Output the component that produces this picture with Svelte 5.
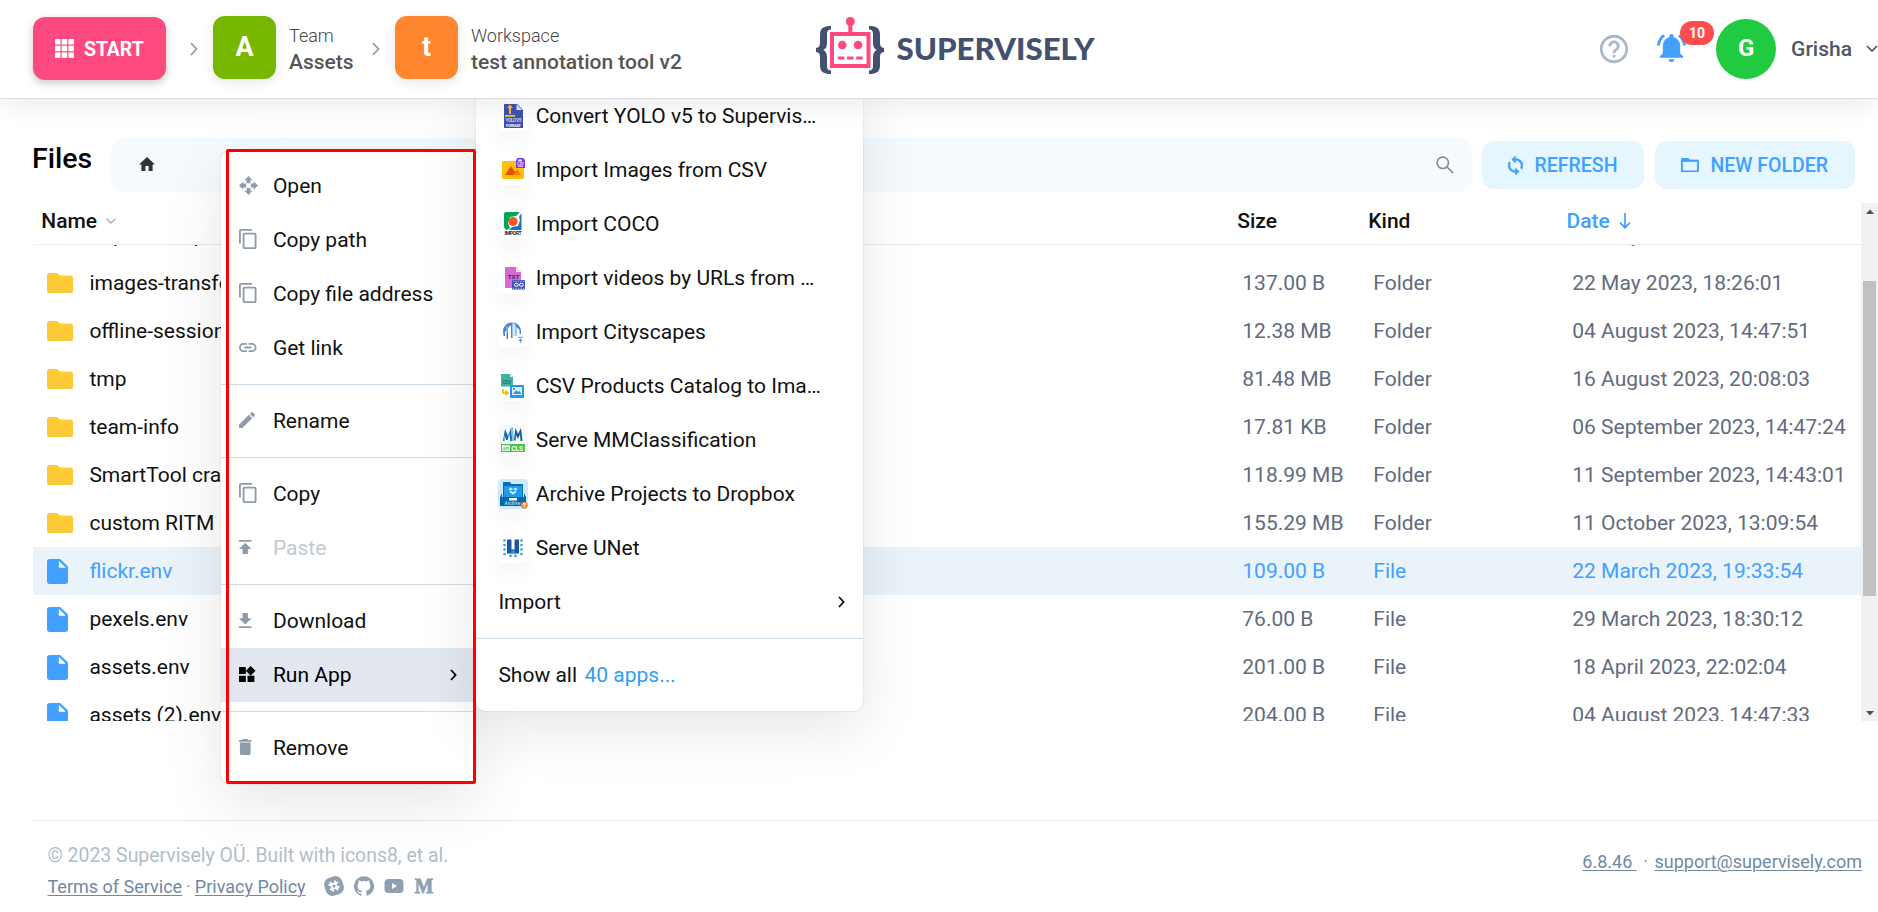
<script>
  const files = [
    { name: 'import-temp', size: '', kind: '', date: '22 May 2023, 18:20:01', type: 'folder' },
    { name: 'images-transforms', size: '137.00 B', kind: 'Folder', date: '22 May 2023, 18:26:01', type: 'folder' },
    { name: 'offline-sessions', size: '12.38 MB', kind: 'Folder', date: '04 August 2023, 14:47:51', type: 'folder' },
    { name: 'tmp', size: '81.48 MB', kind: 'Folder', date: '16 August 2023, 20:08:03', type: 'folder' },
    { name: 'team-info', size: '17.81 KB', kind: 'Folder', date: '06 September 2023, 14:47:24', type: 'folder' },
    { name: 'SmartTool cra', size: '118.99 MB', kind: 'Folder', date: '11 September 2023, 14:43:01', type: 'folder' },
    { name: 'custom RITM', size: '155.29 MB', kind: 'Folder', date: '11 October 2023, 13:09:54', type: 'folder' },
    { name: 'flickr.env', size: '109.00 B', kind: 'File', date: '22 March 2023, 19:33:54', type: 'file', selected: true },
    { name: 'pexels.env', size: '76.00 B', kind: 'File', date: '29 March 2023, 18:30:12', type: 'file' },
    { name: 'assets.env', size: '201.00 B', kind: 'File', date: '18 April 2023, 22:02:04', type: 'file' },
    { name: 'assets (2).env', size: '204.00 B', kind: 'File', date: '04 August 2023, 14:47:33', type: 'file' }
  ];

  const copyPath = 'M16 1H4c-1.1 0-2 .9-2 2v14h2V3h12V1zm3 4H8c-1.1 0-2 .9-2 2v14c0 1.1.9 2 2 2h11c1.1 0 2-.9 2-2V7c0-1.1-.9-2-2-2zm0 16H8V7h11v14z';
  const copy = { box: '2 1 19 22', w: 17.5, h: 20, d: copyPath };
  const groups = [
    [
      { label: 'Open', icon: { box: '0 0 20 20', w: 19, h: 19, d: 'M10 0l4.200 4.500h-2.200v3h-4v-3H5.800zM10 20l-4.200-4.500h2.200v-3h4v3h2.200zM0 10l4.500-4.200v2.200h3v4h-3v2.200zM20 10l-4.500 4.200v-2.200h-3v-4h3v-2.200z' } },
      { label: 'Copy path', icon: copy },
      { label: 'Copy file address', icon: copy },
      { label: 'Get link', icon: { box: '2 7 20 10', w: 17.5, h: 9, d: 'M3.900 12c0-1.710 1.390-3.100 3.100-3.100h4V7H7c-2.760 0-5 2.240-5 5s2.240 5 5 5h4v-1.900H7c-1.710 0-3.100-1.390-3.100-3.100zM8 13h8v-2H8v2zm9-6h-4v1.900h4c1.710 0 3.100 1.390 3.100 3.100s-1.390 3.100-3.100 3.100h-4V17h4c2.760 0 5-2.240 5-5s-2.240-5-5-5z' } }
    ],
    [{ label: 'Rename', icon: { box: '3 3 18 18', w: 16, h: 16, d: 'M3 17.250V21h3.750L17.810 9.940l-3.750-3.750L3 17.250zM20.710 7.040c.39-.39.39-1.020 0-1.410l-2.340-2.340c-.39-.39-1.020-.39-1.410 0l-1.830 1.830 3.750 3.750 1.830-1.830z' } }],
    [
      { label: 'Copy', icon: copy },
      { label: 'Paste', disabled: true, icon: { box: '5 4 14 16', w: 12.500, h: 14.500, d: 'M5 4v2h14V4H5zm0 10h4v6h6v-6h4l-7-7-7 7z' } }
    ],
    [
      { label: 'Download', icon: { box: '5 3 14 17', w: 12.500, h: 15, d: 'M19 9h-4V3H9v6H5l7 7 7-7zM5 18v2h14v-2H5z' } },
      { label: 'Run App', active: true, icon: { box: '3 1.700 19.300 19.300', w: 16.500, h: 16.500, d: 'M13 13v8h8v-8h-8zM3 21h8v-8H3v8zM3 3v8h8V3H3zm13.660-1.310L11 7.340 16.660 13l5.660-5.660-5.660-5.650z' } }
    ],
    [{ label: 'Remove', icon: { box: '5 3 14 18', w: 12.500, h: 16, d: 'M6 19c0 1.100.9 2 2 2h8c1.100 0 2-.9 2-2V7H6v12zM19 4h-3.500l-1-1h-5l-1 1H5v2h14V4z' } }]
  ];

  const apps = [
    { id: 'yolo', label: 'Convert YOLO v5 to Supervis…' },
    { id: 'csv', label: 'Import Images from CSV' },
    { id: 'coco', label: 'Import COCO' },
    { id: 'url', label: 'Import videos by URLs from …' },
    { id: 'city', label: 'Import Cityscapes' },
    { id: 'catalog', label: 'CSV Products Catalog to Ima…' },
    { id: 'mm', label: 'Serve MMClassification' },
    { id: 'dropbox', label: 'Archive Projects to Dropbox' },
    { id: 'unet', label: 'Serve UNet' }
  ];
</script>

{#snippet chevron(cls)}
  <svg class={cls} width="8" height="14" viewBox="0 0 8 14" fill="none" stroke="currentColor" stroke-width="1.8"><path d="M1 1l5.500 6L1 13" /></svg>
{/snippet}

{#snippet menuArrow()}
  <svg class="arrow" width="7" height="12" viewBox="0 0 7 12" fill="none" stroke="currentColor" stroke-width="1.800"><path d="M1 1l4.600 5L1 11" /></svg>
{/snippet}

{#snippet appIcon(id)}
  <svg width="30" height="30" viewBox="0 0 30 30">
    {#if id === 'yolo'}
      <path d="M6 3h13l6 6v18H6z" fill="#3f51b5" />
      <path d="M18.500 3.500V9H24z" fill="#e8eaf6" />
      <path d="M12 3.500l3 3.500h-2v6h-2V7H9zM7 14h10v1.700H7z" fill="#ffc107" />
      <text x="15.500" y="21.300" font-size="4.800" font-weight="700" text-anchor="middle" fill="#c5cae9" textLength="16">YOLO V5</text>
      <text x="15.500" y="26.200" font-size="4.300" font-weight="700" text-anchor="middle" fill="#e8eaf6" textLength="15">FORMAT</text>
    {:else if id === 'csv'}
      <rect x="4" y="6" width="22" height="18" rx="1.500" fill="#ffc107" />
      <path d="M7 20l6-9 6 9z" fill="#e65100" />
      <path d="M15 20l4-6 4 6z" fill="#f57c00" />
      <path d="M19 3h6l2 2v8h-9V6z" fill="#7c3aed" />
      <path d="M20 4.500h4v2h-4zM20 10.500h5v1.300h-5z" fill="#e4d4ff" />
      <text x="22.500" y="10" font-size="3.600" font-weight="700" text-anchor="middle" fill="#e4d4ff">CSV</text>
    {:else if id === 'coco'}
      <path d="M6 5q0-2 2-2h14l-4 4-6 1-2 6 2 5-3 2q-3-1-3-4z" fill="#00a651" />
      <path d="M23.500 4v17H11l3-3 6-1 2-6-1-3z" fill="#1c75bc" />
      <circle cx="15" cy="12.500" r="4.600" fill="#ff5722" />
      <text x="15" y="26.300" font-size="5" font-weight="700" text-anchor="middle" fill="#222" textLength="17">IMPORT</text>
    {:else if id === 'url'}
      <path d="M7 4h11l5 5v16H7z" fill="#d56ad0" />
      <path d="M18 4v5h5z" fill="#f8dcf6" />
      <text x="15.500" y="16" font-size="6.200" font-weight="700" text-anchor="middle" fill="#5a1a80">TXT</text>
      <rect x="14" y="17" width="13" height="9.500" fill="#3f51b5" />
      <path d="M15 18.200h11.500M15 25.300h11.500" stroke="#c5cae9" stroke-width="1" stroke-dasharray="1.200 1.300" />
      <rect x="16.500" y="20.300" width="3.800" height="3" rx="1.500" fill="none" stroke="#fff" />
      <rect x="21.500" y="20.300" width="3.800" height="3" rx="1.500" fill="none" stroke="#fff" />
    {:else if id === 'city'}
      <path d="M5 14a9 8.500 0 0 1 18 0v3h-1.500v-4l-3-3v9h-1V8l-3-2v15h-1.500V8l-3 3v11H8.500v-9L7 15v4H5.500z" fill="#3f8ad0" />
      <path d="M9 9v6M16 6v13" stroke="#a9cdf0" />
      <path d="M20 20.200h5M22.500 26v-4M20.900 23.600l1.600-1.600 1.600 1.600" stroke="#5a9bdc" fill="none" stroke-width="1.100" />
    {:else if id === 'catalog'}
      <path d="M3 3h9l3 3v9.500H3z" fill="#3eb5a4" />
      <path d="M12 3v3h3z" fill="#c9eee8" />
      <text x="8.500" y="12.500" font-size="4.500" font-weight="700" text-anchor="middle" fill="#16796c">CSV</text>
      <path d="M5 18v4h4M7.500 19.800L10 22l-2.500 2.200" stroke="#ffb300" stroke-width="1.700" fill="none" />
      <rect x="12" y="14" width="14" height="13" fill="#2196f3" />
      <rect x="14" y="16" width="10" height="8" fill="#e3f2fd" />
      <path d="M15 23l3-4 2 2 1.500-1 2 3z" fill="#2196f3" />
      <circle cx="16" cy="18" r="1" fill="#1976d2" />
    {:else if id === 'mm'}
      <rect width="30" height="30" rx="4" fill="#f6f8fa" />
      <path d="M5 16L7 4l3 7 3-8 1.500 13h-2.200l-.8-7-2 6h-1.500l-1.500-5L6.500 16z" fill="#0d6cb5" />
      <path d="M13 3l2-1 1 14h-2z" fill="#7cc3ea" />
      <path d="M16 15l1.500-12L20 9l3-6 1.500 13h-2l-.5-7-2 5-2-4-.5 6z" fill="#175a92" />
      <rect x="3" y="19" width="24" height="8" fill="#44c544" />
      <rect x="4" y="20.300" width="8" height="5.500" fill="#fff" />
      <text x="8" y="25" font-size="4" font-weight="700" text-anchor="middle" fill="#44c544">API</text>
      <text x="19.200" y="25.600" font-size="6.500" font-weight="700" text-anchor="middle" fill="#fff">CLS</text>
    {:else if id === 'dropbox'}
      <rect width="30" height="30" rx="4" fill="#cdeaff" />
      <path d="M5 3h7l1.500 2H25v14H5z" fill="#0870b0" />
      <path d="M6 7h18v13H6z" fill="#1c9cf0" />
      <path d="M2 18l2-4v4h22v-4l2 4v9H2z" fill="#0c65a6" />
      <path d="M12.200 8.500l2.800 1.600-2.800 1.600-1.600-1.600zM17.800 8.500L15 10.100l2.800 1.600 1.600-1.600zM15 13l2.500-1.200 1 1.200-3.500 2.700L11.500 13l1-1.200z" fill="#d3edff" />
      <rect x="11" y="19" width="8" height="2.500" fill="#fff" />
      <text x="14.500" y="26" font-size="4.800" font-style="italic" font-weight="700" text-anchor="middle" fill="#9fd0f3">Archive</text>
      <circle cx="26.300" cy="26.300" r="3.400" fill="#f58220" />
      <path d="M26.300 28.300v-4M24.700 25.600l1.600-1.700 1.600 1.700" stroke="#fff" fill="none" />
    {:else}
      <path d="M9 6.500h4.500v10h3v-10H21v14H9z" fill="#1c5aa0" />
      <path d="M13.500 16.500h3v4h-3z" fill="#2f8fd8" />
      <g fill="#29a3e0">
        {#each [7.500, 12, 16.500, 21] as y}
          <circle cx="6.500" cy={y} r="1.300" /><circle cx="23.500" cy={y} r="1.300" />
        {/each}
        <circle cx="12.500" cy="22.800" r="1.400" /><circle cx="17.500" cy="22.800" r="1.400" />
      </g>
    {/if}
  </svg>
{/snippet}

<div class="page">
  <header>
    <button class="start">
      <svg width="19" height="19" viewBox="0 0 19 19" fill="#fff">
        {#each [0, 6.700, 13.400] as y}{#each [0, 6.700, 13.400] as x}<rect {x} {y} width="5.500" height="5.500" />{/each}{/each}
      </svg>
      <span>START</span>
    </button>
    {@render chevron('crumb c1')}
    <div class="tile green">A</div>
    <div class="crumb-text team"><span>Team</span><b>Assets</b></div>
    {@render chevron('crumb c2')}
    <div class="tile orange">t</div>
    <div class="crumb-text"><span>Workspace</span><b>test annotation tool v2</b></div>

    <svg class="logo" width="280" height="60" viewBox="0 0 280 60">
      <g fill="#435070">
        <path d="M16 12v3.500c-3 .2-4 1.500-4 5v8c0 4-1.200 6.500-3.800 7.500 2.600 1 3.800 3.500 3.800 7.500v8c0 3.500 1 4.800 4 5V60c-8 0-11-2.500-11-9v-8c0-3-1-4.500-4-5v-4c3-.5 4-2 4-5v-8c0-6.500 3-9 11-9z" />
        <path d="M54 12v3.500c3 .2 4 1.500 4 5v8c0 4 1.200 6.500 3.800 7.500-2.600 1-3.800 3.500-3.800 7.500v8c0 3.500-1 4.800-4 5V60c8 0 11-2.500 11-9v-8c0-3 1-4.500 4-5v-4c-3-.5-4-2-4-5v-8c0-6.500-3-9-11-9z" />
      </g>
      <rect x="17" y="20" width="36.500" height="32" fill="#fff" stroke="#ff4a7f" stroke-width="4" />
      <path d="M35.300 8v12" stroke="#ff4a7f" stroke-width="4" />
      <g fill="#ff4a7f">
        <circle cx="35.300" cy="7.500" r="4.500" />
        <circle cx="27.300" cy="31" r="4.300" /><circle cx="43" cy="31" r="4.300" />
        <path d="M22.800 42.500h6.500v3h-6.500zM32 42.500h6.500v3H32zM41.200 42.500h6.500v3h-6.500z" />
      </g>
      <text x="81.500" y="45.800" textLength="198" lengthAdjust="spacingAndGlyphs" class="wordmark">SUPERVISELY</text>
    </svg>

    <div class="account">
      <svg class="help" width="34" height="34" viewBox="0 0 24 24" fill="#a9b9c9"><path d="M11 18h2v-2h-2v2zm1-16C6.480 2 2 6.480 2 12s4.480 10 10 10 10-4.480 10-10S17.520 2 12 2zm0 18c-4.410 0-8-3.590-8-8s3.590-8 8-8 8 3.590 8 8-3.590 8-8 8zm0-14c-2.210 0-4 1.790-4 4h2c0-1.100.9-2 2-2s2 .9 2 2c0 2-3 1.750-3 5h2c0-2.250 3-2.500 3-5 0-2.210-1.790-4-4-4z" /></svg>
      <div class="bell">
        <svg width="29" height="28" viewBox="2 2.500 20 19.500" preserveAspectRatio="none" fill="#42a0ff"><path d="M7.580 4.080L6.150 2.650C3.750 4.480 2.170 7.300 2.030 10.500h2c.15-2.650 1.510-4.970 3.550-6.420zm12.390 6.420h2c-.15-3.200-1.730-6.020-4.120-7.850l-1.420 1.430c2.020 1.450 3.390 3.770 3.540 6.420zM18 11c0-3.070-1.640-5.640-4.500-6.320V4c0-.83-.67-1.500-1.500-1.500s-1.500.67-1.500 1.500v.68C7.630 5.360 6 7.920 6 11v5l-2 2v1h16v-1l-2-2v-5zm-6 11c.14 0 .27-.01.4-.04.65-.14 1.180-.58 1.440-1.180.1-.24.15-.5.15-.78h-4c.01 1.100.9 2 2.010 2z" /></svg>
        <span class="badge">10</span>
      </div>
      <div class="avatar">G</div>
      <span class="user">Grisha</span>
      <svg width="12" height="7" viewBox="0 0 12 7" fill="none" stroke="#435070" stroke-width="1.600"><path d="M1 1l5 5 5-5" /></svg>
    </div>
  </header>

  <main>
    <div class="toolbar">
      <h1>Files</h1>
      <div class="path">
        <svg class="home" width="16" height="14" viewBox="2 3 20 17" preserveAspectRatio="none" fill="#333"><path d="M10 20v-6h4v6h5v-8h3L12 3 2 12h3v8z" /></svg>
        <svg width="18" height="18" viewBox="0 0 18 18" fill="none" stroke="#8c8c8c" stroke-width="1.700"><circle cx="6.800" cy="6.800" r="5.700" /><path d="M11 11l6 6" /></svg>
      </div>
      <button class="action refresh">
        <svg width="15" height="19" viewBox="4 1 16 22" preserveAspectRatio="none" fill="currentColor" stroke="currentColor" stroke-width=".7"><path d="M12 4V1L8 5l4 4V6c3.310 0 6 2.690 6 6 0 1.010-.25 1.970-.7 2.800l1.460 1.460C19.540 15.030 20 13.570 20 12c0-4.420-3.580-8-8-8zm0 14c-3.310 0-6-2.690-6-6 0-1.010.25-1.970.7-2.800L5.240 7.740C4.460 8.970 4 10.430 4 12c0 4.420 3.580 8 8 8v3l4-4-4-4v3z" /></svg>
        <span>REFRESH</span>
      </button>
      <button class="action newf">
        <svg width="18" height="14.500" viewBox="2 4 20 16" fill="currentColor" stroke="currentColor" stroke-width=".4"><path d="M20 6h-8l-2-2H4c-1.100 0-1.990.9-1.990 2L2 18c0 1.100.9 2 2 2h16c1.100 0 2-.9 2-2V8c0-1.100-.9-2-2-2zm0 12H4V8h16v10z" /></svg>
        <span>NEW FOLDER</span>
      </button>
    </div>

    <div class="table">
      <div class="grid">
        <div class="row head">
          <div>Name <svg width="10" height="6" viewBox="0 0 10 6" fill="none" stroke="#aaa" stroke-width="1.400"><path d="M.5.500l4.500 4.500L9.500.500" /></svg></div>
          <div>Size</div>
          <div>Kind</div>
          <div class="sorted">Date <svg width="12" height="16" viewBox="0 0 12 16" fill="none" stroke="currentColor" stroke-width="1.700"><path d="M6 0v14.500M1 9.700l5 5 5-5" /></svg></div>
        </div>
        <div class="rows">
          {#each files as f}
            <div class="row item" class:selected={f.selected}>
              <div class="name">
                <span class="ficon">
                  {#if f.type === 'folder'}
                    <svg width="26" height="20.500" viewBox="2 4 20 16" preserveAspectRatio="none" fill="#ffca38"><path d="M10 4H4c-1.100 0-1.990.9-1.990 2L2 18c0 1.100.9 2 2 2h16c1.100 0 2-.9 2-2V8c0-1.100-.9-2-2-2h-8l-2-2z" /></svg>
                  {:else}
                    <svg width="21" height="25" viewBox="4 2 16 20" preserveAspectRatio="none" fill="#42a0ff"><path d="M6 2c-1.100 0-1.990.9-1.990 2L4 20c0 1.100.89 2 1.990 2H18c1.100 0 2-.9 2-2V8l-6-6H6zm7 7V3.500L18.500 9H13z" /></svg>
                  {/if}
                </span>
                {f.name}
              </div>
              <div>{f.size}</div>
              <div>{f.kind}</div>
              <div>{f.date}</div>
            </div>
          {/each}
        </div>
      </div>
      <div class="scroll">
        <svg width="8" height="5" viewBox="0 0 8 5" fill="#505050"><path d="M0 5l4-4.500L8 5z" /></svg>
        <i></i>
        <svg width="8" height="5" viewBox="0 0 8 5" fill="#505050"><path d="M0 0l4 4.500L8 0z" /></svg>
      </div>
    </div>
  </main>

  <footer>
    <div>
      <p>© 2023 Supervisely OÜ. Built with icons8, et al.</p>
      <p class="links">
        <a href="#terms">Terms of Service</a><span class="dot">·</span><a href="#privacy">Privacy Policy</a>
        <svg class="social" width="20" height="20" viewBox="0 0 20 20"><rect x=".7" y=".7" width="18.600" height="18.600" rx="7" fill="#8fa0b2" transform="rotate(-17 10 10)" /><path d="M7.700 5v10M12.300 5v10M5 7.700h10M5 12.300h10" stroke="#fff" stroke-width="1.900" transform="rotate(-17 10 10)" /></svg>
        <svg width="20" height="20" viewBox="0 0 24 24" fill="#8fa0b2"><path d="M12 .3a12 12 0 0 0-3.800 23.400c.6.1.8-.3.8-.6v-2c-3.300.7-4-1.600-4-1.600-.6-1.400-1.400-1.800-1.400-1.800-1-.7.1-.7.1-.7 1.200 0 1.900 1.200 1.900 1.200 1 1.800 2.800 1.300 3.500 1 0-.8.4-1.300.7-1.600-2.700-.3-5.500-1.300-5.500-6 0-1.200.5-2.300 1.300-3.100-.2-.4-.6-1.600 0-3.200 0 0 1-.3 3.400 1.200a11.500 11.500 0 0 1 6 0c2.300-1.500 3.300-1.200 3.300-1.200.6 1.600.2 2.800 0 3.200.9.800 1.300 1.900 1.300 3.200 0 4.600-2.800 5.600-5.500 5.900.5.4.9 1 .9 2.200v3.300c0 .3.1.7.8.6A12 12 0 0 0 12 .3" /></svg>
        <svg width="20" height="20" viewBox="0 0 20 20"><rect x=".5" y="3" width="19" height="14" rx="4" fill="#8fa0b2" /><path d="M8 7l5.200 3L8 13z" fill="#fff" /></svg>
        <svg width="20" height="20" viewBox="0 0 20 20"><text x="10" y="17" text-anchor="middle" class="medium" textLength="18.500" lengthAdjust="spacingAndGlyphs">M</text></svg>
      </p>
    </div>
    <div class="right"><a href="#version">6.8.46&nbsp;</a><span>·</span><a href="#support">support@supervisely.com</a></div>
  </footer>

  <div class="menu context">
    {#each groups as group}
      <div class="group">
        {#each group as item}
          <div class="mitem" class:disabled={item.disabled} class:active={item.active}>
            <span class="micon"><svg width={item.icon.w} height={item.icon.h} viewBox={item.icon.box} preserveAspectRatio="none" fill="currentColor"><path d={item.icon.d} /></svg></span>
            {item.label}
            {#if item.active}{@render menuArrow()}{/if}
          </div>
        {/each}
      </div>
    {/each}
  </div>

  <div class="menu sub">
    <div class="group">
      {#each apps as app}
        <div class="mitem"><span class="aicon">{@render appIcon(app.id)}</span>{app.label}</div>
      {/each}
      <div class="mitem">Import {@render menuArrow()}</div>
    </div>
    <div class="group">
      <div class="mitem">Show all <a href="#apps">40 apps...</a></div>
    </div>
  </div>

  <div class="highlight"></div>
</div>

<style>
  :global(body) { background: #fff; }
  .page, .page :global(*) { box-sizing: border-box; }
  .page {
    position: relative;
    width: 1878px;
    height: 912px;
    overflow: hidden;
    display: flex;
    flex-direction: column;
    font: 400 21px/1.2 Roboto, sans-serif;
    color: #111;
    background: #fff;
  }
  svg { display: block; flex: none; }
  button { border: 0; font-family: inherit; display: flex; align-items: center; white-space: nowrap; flex: none; }
  button span { padding-top: 1px; }

  header {
    position: relative;
    z-index: 5;
    height: 99px;
    flex: none;
    display: flex;
    align-items: center;
    padding: 0 0 1px 33px;
    background: #fff;
    border-bottom: 1px solid #dddce6;
    box-shadow: 0 6px 24px rgba(0, 0, 0, 0.08);
  }
  .start {
    width: 133px;
    height: 63px;
    gap: 10px;
    padding: 0 0 0 22px;
    border-radius: 12px;
    background: #ff4a80;
    color: #fff;
    font-size: 19.500px;
    font-weight: 700;
    letter-spacing: -0.1px;
    box-shadow: 0 3px 9px rgba(0, 0, 0, 0.22);
  }
  :global(.crumb) { color: #9c9c9c; }
  :global(.c1) { margin: 0 15px 0 24px; }
  :global(.c2) { margin: 0 15px 0 0; }
  .tile {
    width: 63px;
    height: 63px;
    margin-bottom: 2px;
    flex: none;
    display: flex;
    align-items: center;
    justify-content: center;
    border-radius: 12px;
    color: #fff;
    font-size: 27px;
    font-weight: 700;
    box-shadow: 0 3px 12px rgba(0, 0, 0, 0.1);
  }
  .green { background: #77b700; }
  .orange { background: #ff852e; }
  .crumb-text { margin-left: 13px; display: flex; flex-direction: column; white-space: nowrap; }
  .team { width: 83px; margin-left: 13px; }
  .crumb-text span { font-size: 18px; line-height: 26px; font-weight: 300; color: #444; }
  .crumb-text b { font-size: 21px; line-height: 26px; font-weight: 500; color: #555; }
  .logo { position: absolute; left: 815px; top: 14px; }
  .wordmark { font: 900 31px Lato, sans-serif; fill: #435070; }
  .account { margin-left: auto; display: flex; align-items: center; }
  .help { margin-right: 26px; }
  .bell { position: relative; margin: 0 30px 2px 0; }
  .badge {
    position: absolute;
    left: 23px;
    top: -13px;
    width: 34px;
    height: 24px;
    border-radius: 12px;
    background: #ff4c4c;
    color: #fff;
    font-size: 14px;
    line-height: 25px;
    font-weight: 700;
    text-align: center;
  }
  .avatar {
    width: 60px;
    height: 60px;
    border-radius: 50%;
    background: #20cb42;
    color: #fff;
    font-size: 24px;
    font-weight: 700;
    display: flex;
    align-items: center;
    justify-content: center;
  }
  .user { margin: 0 14px 0 15px; padding-top: 2px; font-weight: 500; color: #4c5767; }

  main { height: 622px; padding: 39px 0 0 33px; flex: none; }
  .toolbar { display: flex; align-items: center; height: 54px; }
  h1 { margin: -11px 0 0 -1px; width: 80px; font-size: 28.500px; font-weight: 500; color: #000; }
  .path {
    width: 1361px;
    margin-left: -1px;
    height: 54px;
    display: flex;
    align-items: center;
    justify-content: space-between;
    padding: 0 18px 0 28px;
    border-radius: 14px;
    background: #f4fafd;
  }
  .home { margin-top: -2px; }
  .action { height: 48px; border-radius: 12px; background: #e5f6ff; color: #42a0ff; font-size: 19.500px; font-weight: 500; padding: 0; }
  .refresh { width: 162px; margin-left: 10px; padding-left: 26px; gap: 11.500px; }
  .newf { width: 200px; margin-left: 11px; padding-left: 26px; gap: 11.500px; }

  .table { display: flex; height: 518px; margin-top: 11px; }
  .grid { width: 1828px; height: 518px; display: flex; flex-direction: column; }
  .row { display: grid; grid-template-columns: 1195px 131px 199px 1fr; align-items: center; }
  .head { height: 42px; flex: none; align-items: stretch; font-weight: 500; color: #111; }
  .head div { display: flex; align-items: center; gap: 9px; padding: 0 0 4px 8.300px; border-bottom: 1px solid #ececec; }
  .head div + div { border-left: 1px solid #fff; }
  .head .sorted { color: #42a0ff; padding-left: 7.500px; }
  .head svg { margin-top: -1px; }
  .rows { flex: 1; min-height: 0; overflow: hidden; display: flex; flex-direction: column; }
  .item { height: 48px; flex: none; color: #626b80; padding-top: 2px; }
  .item:first-child { margin-top: -34px; }
  .item div { padding-left: 14.300px; white-space: nowrap; }
  .item .name { display: flex; align-items: center; padding-left: 14px; color: #111; }
  .ficon { width: 42.400px; flex: none; margin-top: -2px; }
  .item.selected { background: #eaf3f9; }
  .item.selected div { color: #42a0ff; }
  .scroll { width: 17px; background: #f1f1f1; display: flex; flex-direction: column; align-items: center; padding: 6px 0 5px; }
  .scroll i { width: 13px; height: 315px; background: #c1c1c1; margin: 67px 0 auto; }

  footer {
    margin: 99px 0 0 33px;
    padding: 21px 16px 0 14.500px;
    border-top: 1px solid #eaeaea;
    display: flex;
    justify-content: space-between;
    height: 92px;
  }
  footer p { margin: 0; font-size: 19.450px; line-height: 27px; color: #b3bccb; white-space: nowrap; }
  footer a { font-size: 18px; color: #7088a3; text-decoration: underline; text-underline-offset: 2px; text-decoration-thickness: 1px; }
  footer .links { display: flex; align-items: center; gap: 10px; margin-top: 4px; }
  footer .links svg { margin-top: -1px; }
  .dot { margin: 0 -6px; font-size: 18px; color: #8fa0b2; }
  .social { margin-left: 8px; }
  .medium { font: 700 20px "Liberation Serif", serif; fill: #8fa0b2; stroke: #8fa0b2; stroke-width: 0.8px; }
  .right { display: flex; gap: 6.500px; padding-top: 9px; color: #8fa0b2; font-size: 18px; }

  .menu { position: absolute; background: #fff; border-radius: 9px; box-shadow: 0 0 1.500px rgba(0, 0, 0, 0.22), 0 18px 60px rgba(0, 0, 0, 0.1); }
  .context { left: 221px; top: 150px; width: 255px; z-index: 2; }
  .sub { left: 476px; top: 80px; width: 387px; z-index: 3; border-top-left-radius: 0; }
  .group { padding: 9px 0; }
  .group + .group { border-top: 1px solid #cfdbe4; }
  .mitem { height: 54px; display: flex; align-items: center; padding: 2px 19px 0 18px; white-space: nowrap; color: #111; }
  .sub .mitem { padding: 2px 18px 0 22.400px; }
  .micon { width: 33.900px; flex: none; margin-top: -4px; color: #8d9cab; }
  .mitem.active { background: #e3e7f0; }
  .mitem.active, .active .micon { color: #000; }
  .mitem.disabled { color: #c3c9d4; }
  .mitem :global(.arrow) { margin: -2px 0 0 auto; }
  .aicon { width: 30px; height: 30px; margin: -2px 7.300px 0 0; flex: none; border-radius: 4px; background: #fff; box-shadow: 0 12px 18px rgba(0, 0, 0, 0.035); }
  .mitem a { margin-left: 7.500px; color: #2ba0f5; text-decoration: none; }
  .highlight { position: absolute; z-index: 4; left: 226px; top: 149px; width: 250px; height: 635px; border: 3px solid #f00; border-radius: 2px; }
</style>
